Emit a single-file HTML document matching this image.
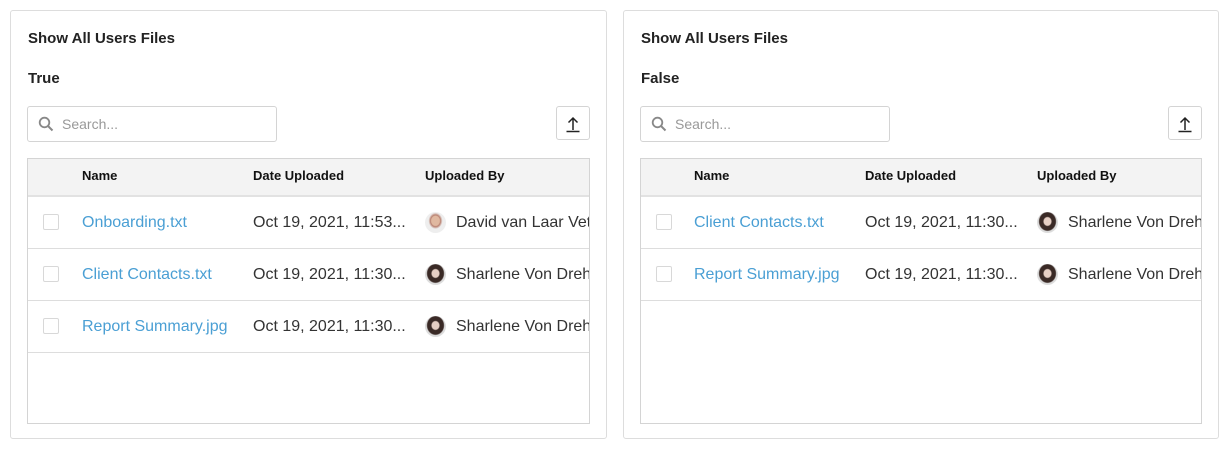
<!DOCTYPE html>
<html><head><style>
*{box-sizing:border-box;margin:0;padding:0}
body{width:1230px;height:449px;background:#fff;font-family:"Liberation Sans",Arial,sans-serif;position:relative;overflow:hidden;color:#333}
.panel{position:absolute;top:10px;width:597px;height:429px;border:1px solid #ddd;border-radius:3px}
.t{position:absolute;left:17px;font-weight:bold;font-size:15px;color:#222}
.search{position:absolute;left:16px;top:95px;width:250px;height:36px;border:1px solid #d4d4d4;border-radius:3px}
.search span{position:absolute;left:34px;top:9px;font-size:14px;color:#999}
.search svg{position:absolute;left:10px;top:9px}
.up{position:absolute;left:545px;top:95px;width:34px;height:34px;border:1px solid #d4d4d4;border-radius:3px}
.up svg{position:absolute;left:8px;top:8px}
.tbl{position:absolute;left:16px;top:147px;width:563px;height:266px;border:1px solid #d4d4d4;overflow:hidden}
.hd{height:38px;background:#f3f3f3;border-bottom:2px solid #e2e2e2;position:relative;font-weight:bold;font-size:13px;color:#111}
.hd span,.row span{position:absolute;white-space:nowrap}
.hd span{top:9px}
.row{height:52px;border-bottom:1px solid #ddd;position:relative;font-size:16px}
.row span{top:17px}
.cb{position:absolute;left:15px;top:17px;width:16px;height:16px;border:1px solid #d8d8d8;border-radius:2px}
.a{color:#4a9fd4}
.av{position:absolute;left:397px;top:15px;width:21px;height:21px;border-radius:50%;overflow:hidden;background:#ddd}
.av.f{background:radial-gradient(ellipse at 50% 45%,#e6cfc4 0 3.5px,#3a2a26 4.5px 8px,#ddd 9px)}
.av.m{background:radial-gradient(ellipse at 50% 42%,#e0b8a0 0 4px,#b88070 5px,#eee 7px)}
</style></head><body>

<div class="panel" style="left:10px">
<div class="t" style="top:19px">Show All Users Files</div>
<div class="t" style="top:59px">True</div>
<div class="search"><svg width="16" height="16" viewBox="0 0 16 16"><circle cx="6.5" cy="6.5" r="4.8" fill="none" stroke="#888" stroke-width="1.8"/><path d="M10 10l4.5 4.5" stroke="#888" stroke-width="2"/></svg><span>Search...</span></div>
<div class="up"><svg width="16" height="18" viewBox="0 0 16 18"><path d="M8 15V3M3.5 7.5L8 3l4.5 4.5M1.5 16.5h13" fill="none" stroke="#222" stroke-width="1.5"/></svg></div>
<div class="tbl">
<div class="hd"><span style="left:54px">Name</span><span style="left:225px">Date Uploaded</span><span style="left:397px">Uploaded By</span></div>
<div class="row"><div class="cb"></div><span class="a" style="left:54px">Onboarding.txt</span><span style="left:225px">Oct 19, 2021, 11:53...</span><div class="av m"></div><span style="left:428px">David van Laar Vet</span></div>
<div class="row"><div class="cb"></div><span class="a" style="left:54px">Client Contacts.txt</span><span style="left:225px">Oct 19, 2021, 11:30...</span><div class="av f"></div><span style="left:428px">Sharlene Von Dreh</span></div>
<div class="row"><div class="cb"></div><span class="a" style="left:54px">Report Summary.jpg</span><span style="left:225px">Oct 19, 2021, 11:30...</span><div class="av f"></div><span style="left:428px">Sharlene Von Dreh</span></div>
</div>
</div>

<div class="panel" style="left:623px;width:596px">
<div class="t" style="top:19px">Show All Users Files</div>
<div class="t" style="top:59px">False</div>
<div class="search"><svg width="16" height="16" viewBox="0 0 16 16"><circle cx="6.5" cy="6.5" r="4.8" fill="none" stroke="#888" stroke-width="1.8"/><path d="M10 10l4.5 4.5" stroke="#888" stroke-width="2"/></svg><span>Search...</span></div>
<div class="up" style="left:544px"><svg width="16" height="18" viewBox="0 0 16 18"><path d="M8 15V3M3.5 7.5L8 3l4.5 4.5M1.5 16.5h13" fill="none" stroke="#222" stroke-width="1.5"/></svg></div>
<div class="tbl" style="width:562px">
<div class="hd"><span style="left:53px">Name</span><span style="left:224px">Date Uploaded</span><span style="left:396px">Uploaded By</span></div>
<div class="row"><div class="cb"></div><span class="a" style="left:53px">Client Contacts.txt</span><span style="left:224px">Oct 19, 2021, 11:30...</span><div class="av f" style="left:396px"></div><span style="left:427px">Sharlene Von Dreh</span></div>
<div class="row"><div class="cb"></div><span class="a" style="left:53px">Report Summary.jpg</span><span style="left:224px">Oct 19, 2021, 11:30...</span><div class="av f" style="left:396px"></div><span style="left:427px">Sharlene Von Dreh</span></div>
</div>
</div>
</body></html>
